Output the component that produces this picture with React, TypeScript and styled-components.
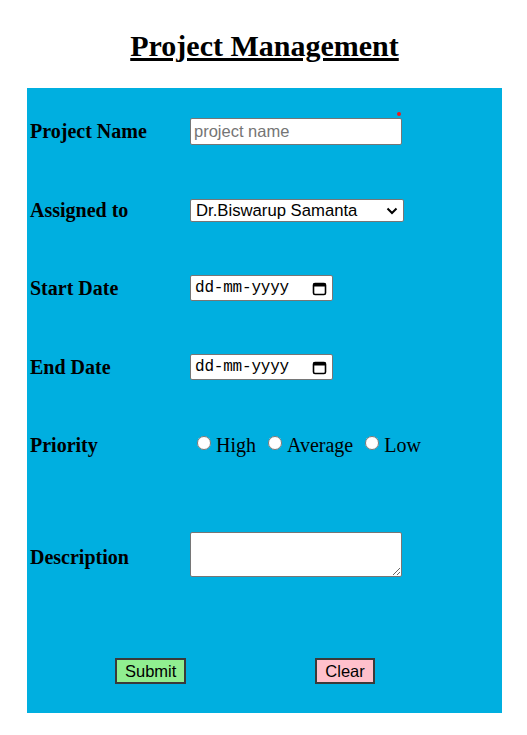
import React from 'react'
import styled, { createGlobalStyle } from 'styled-components'

const GlobalStyle = createGlobalStyle`
  body {
    margin: 0;
    background: #ffffff;
    font-family: "Liberation Serif", "Times New Roman", serif;
  }
`

const Page = styled.div`
  padding: 29px 25px 0 27px;
`

const Title = styled.h1`
  margin: 0 0 26px;
  text-align: center;
  font-size: 30px;
  line-height: 33px;
  font-weight: bold;
  text-decoration: underline;
  color: #000;
`

const Panel = styled.form`
  width: 475px;
  height: 625px;
  box-sizing: border-box;
  padding: 3px 0 2px 3px;
  background: #00afe0;
`

const Row = styled.div<{ $h: number }>`
  display: grid;
  grid-template-columns: 160px 1fr;
  align-items: center;
  height: ${({ $h }) => $h}px;
`

const Label = styled.label`
  font-size: 20px;
  font-weight: bold;
  color: #000;
`

const Field = styled.div`
  position: relative;
  display: flex;
  align-items: center;
`

const TextInput = styled.input`
  width: 212px;
  height: 27px;
  box-sizing: border-box;
  padding: 1px 3px;
  border: 1px solid #767676;
  border-radius: 2px;
  font-family: "Liberation Sans", Arial, sans-serif;
  font-size: 16.5px;
  background: #fff;
  &::placeholder {
    color: #757575;
  }
`

const Dot = styled.span`
  position: absolute;
  left: 207px;
  top: -6px;
  width: 4px;
  height: 4px;
  border-radius: 50%;
  background: #ee1c1c;
`

const Select = styled.select`
  appearance: none;
  width: 214px;
  height: 23px;
  box-sizing: border-box;
  padding: 0 20px 0 5px;
  border: 1px solid #767676;
  border-radius: 2px;
  background: #fff;
  color: #000;
  font-family: "Liberation Sans", Arial, sans-serif;
  font-size: 16.7px;
`

const Chevron = styled.svg`
  position: absolute;
  left: 196px;
  top: 8px;
  pointer-events: none;
`

const DateBox = styled.div`
  width: 143px;
  height: 26px;
  box-sizing: border-box;
  display: flex;
  align-items: center;
  justify-content: space-between;
  padding: 0 5px 0 4px;
  border: 1px solid #767676;
  border-radius: 2px;
  background: #fff;
  font-family: "Liberation Mono", "DejaVu Sans Mono", monospace;
  font-size: 16px;
  letter-spacing: -0.2px;
  color: #000;
`

const RadioGroup = styled.div`
  display: flex;
  align-items: center;
  gap: 12px;
  padding-left: 7px;
`

const RadioOption = styled.label`
  display: inline-flex;
  align-items: center;
  gap: 5px;
  font-size: 20px;
  color: #000;
`

const Radio = styled.input`
  width: 14px;
  height: 14px;
  margin: 0 0 4px 0;
`

const TextArea = styled.textarea`
  width: 212px;
  height: 45px;
  box-sizing: border-box;
  border: 1px solid #767676;
  border-radius: 2px;
  background: #fff;
  margin-top: -5px;
  font-family: "Liberation Mono", monospace;
  font-size: 13px;
`

const ButtonRow = styled.div`
  display: flex;
  align-items: center;
  height: 80px;
  padding-left: 85px;
  gap: 129px;
`

const Button = styled.button<{ $bg: string }>`
  height: 26px;
  box-sizing: border-box;
  padding: 0 8px;
  border: 2px solid #3a3a3a;
  background: ${({ $bg }) => $bg};
  color: #000;
  font-family: "Liberation Sans", Arial, sans-serif;
  font-size: 16.5px;
  cursor: pointer;
`

const CalendarIcon = () => (
  <svg width="15" height="15" viewBox="0 0 15 15">
    <rect x="1.5" y="2.5" width="12" height="11" rx="1.5" fill="none" stroke="#000" strokeWidth="1.6" />
    <rect x="1.5" y="2.5" width="12" height="3" fill="#000" />
  </svg>
)

export default function App() {
  return (
    <>
      <GlobalStyle />
      <Page>
        <Title>Project Management</Title>
        <Panel onSubmit={(e) => e.preventDefault()}>
          <Row $h={80}>
            <Label htmlFor="pname">Project Name</Label>
            <Field>
              <TextInput id="pname" type="text" placeholder="project name" />
              <Dot />
            </Field>
          </Row>
          <Row $h={78}>
            <Label htmlFor="assigned">Assigned to</Label>
            <Field>
              <Select id="assigned" defaultValue="bs">
                <option value="bs">Dr.Biswarup Samanta</option>
              </Select>
              <Chevron width="12" height="8" viewBox="0 0 12 8">
                <path d="M1.5 1.5 L6 6 L10.5 1.5" fill="none" stroke="#000" strokeWidth="2" />
              </Chevron>
            </Field>
          </Row>
          <Row $h={78}>
            <Label>Start Date</Label>
            <Field>
              <DateBox>
                <span>dd-mm-yyyy</span>
                <CalendarIcon />
              </DateBox>
            </Field>
          </Row>
          <Row $h={80}>
            <Label>End Date</Label>
            <Field>
              <DateBox>
                <span>dd-mm-yyyy</span>
                <CalendarIcon />
              </DateBox>
            </Field>
          </Row>
          <Row $h={76}>
            <Label>Priority</Label>
            <RadioGroup>
              {['High', 'Average', 'Low'].map((p) => (
                <RadioOption key={p}>
                  <Radio type="radio" name="priority" value={p} />
                  {p}
                </RadioOption>
              ))}
            </RadioGroup>
          </Row>
          <Row $h={148}>
            <Label htmlFor="desc">Description</Label>
            <Field>
              <TextArea id="desc" />
            </Field>
          </Row>
          <ButtonRow>
            <Button type="submit" $bg="#90ee90">Submit</Button>
            <Button type="reset" $bg="#ffc0cb">Clear</Button>
          </ButtonRow>
        </Panel>
      </Page>
    </>
  )
}
